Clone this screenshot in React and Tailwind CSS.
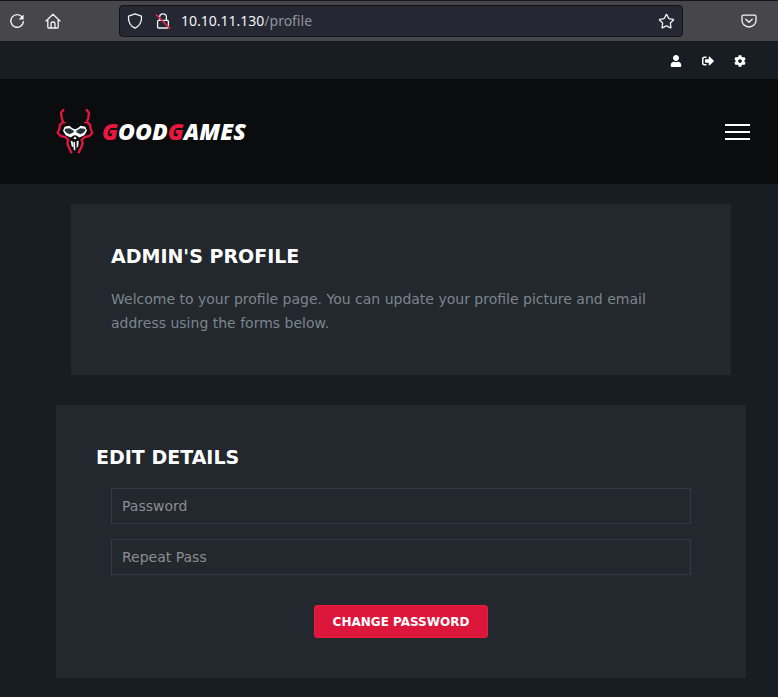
import React from 'react';
import { Star } from 'lucide-react';
import { FaCog, FaSignOutAlt, FaUser } from 'react-icons/fa';

const HomeIcon = () => (
  <svg viewBox="0 0 16 16" className="h-4 w-4" fill="none" stroke="currentColor" strokeWidth="1.3" strokeLinejoin="round" strokeLinecap="round">
    <path d="M1 8 8 1.2 15 8M2.8 6.8v7.4c0 .4.3.8.8.8h8.8c.5 0 .8-.4.8-.8V6.8" />
    <path d="M6 15v-4.2c0-1 .8-1.8 2-1.8s2 .8 2 1.8V15" />
  </svg>
);

const ReloadIcon = () => (
  <svg viewBox="0 0 16 16" className="h-4 w-4" fill="none" stroke="currentColor" strokeWidth="1.4" strokeLinecap="round">
    <path d="M13.2 4.2A6.3 6.3 0 1 0 14.4 8.6" />
    <path d="M14.6 1.4v5H9.6z" fill="currentColor" stroke="none" />
  </svg>
);

const ShieldIcon = () => (
  <svg viewBox="0 0 16 16" className="h-4 w-4" fill="none" stroke="currentColor" strokeWidth="1.3" strokeLinejoin="round">
    <path d="M8 .8 14.4 3.2c.6 5.6-1.4 9.6-6.4 12C3 12.8 1 8.8 1.6 3.2z" />
  </svg>
);

const InsecureIcon = () => (
  <svg viewBox="0 0 16 16" className="h-4 w-4" fill="none" stroke="currentColor" strokeWidth="1.3">
    <rect x="2.6" y="7.4" width="10.8" height="7.6" rx="1" />
    <path d="M4.6 7.4V4.3a3.4 3.4 0 0 1 6.8 0v3.1" />
    <path d="M1 1.5 15 15.5" stroke="#e22850" strokeWidth="1.7" />
  </svg>
);

const PocketIcon = () => (
  <svg viewBox="0 0 16 16" className="h-4 w-4" fill="none" stroke="currentColor" strokeWidth="1.3" strokeLinecap="round" strokeLinejoin="round">
    <path d="M2.2 2.2h11.6c.7 0 1.2.5 1.2 1.2v4A7 6.6 0 0 1 1 7.4v-4c0-.7.5-1.2 1.2-1.2z" />
    <path d="M4.8 6.2 8 9.2l3.2-3" />
  </svg>
);

const SkullLogo = () => (
  <svg viewBox="16 24 114 140" className="h-[47px] w-[38px]" aria-hidden="true">
    <g fill="none" stroke="#e3173e" strokeWidth="7" strokeLinejoin="round">
      <path d="M40 27l-9 11 2 14 4 14-9 8-2 12-5 12 8 9 15 4 9 8-3 11 5 13 8 16" />
      <path d="M106 27l9 11-2 14-4 14 9 8 2 12 5 12-8 9-15 4-9 8 3 11-5 13-8 16" />
      <path d="M36 68l10-1M110 68l-10-1" strokeWidth="4" />
    </g>
    <path fill="#fff" d="M42 80l14-3 9 7 8 3 8-3 9-7 14 3 5 12-8 13-15 7-9-6-4-1-4 1-9 6-15-7-8-13z" />
    <path fill="#26323a" d="M43 86l14-2 12 8v4l-12 6-10-4-5-7zM103 86l-14-2-12 8v4l12 6 10-4 5-7z" />
    <path fill="#fff" d="M73 109l5 6-5 2-5-2zM60 122l6 1 2 18-5-3zM68 126l5-1 1 27-5-4zM78 123l6-1-1 15-5 8z" />
  </svg>
);

const BrowserBar = () => (
  <div className="flex h-[42px] items-center border-y border-[#14171f] bg-[#46464b] pl-[9px] pr-[21px] text-gray-100">
    <div className="flex w-[110px] shrink-0 items-center gap-5">
      <button aria-label="Reload"><ReloadIcon /></button>
      <button aria-label="Home"><HomeIcon /></button>
    </div>
    <div className="flex h-8 flex-1 items-center gap-2.5 rounded border border-[#11131c] bg-[#252733] px-[7px]">
      <div className="flex gap-3">
        <ShieldIcon />
        <InsecureIcon />
      </div>
      <div className="flex-1 font-['Noto_Sans',sans-serif] text-sm">
        10.10.11.130<span className="text-[#93949b]">/profile</span>
      </div>
      <button aria-label="Bookmark"><Star className="h-[17px] w-[17px]" strokeWidth={1.8} /></button>
    </div>
    <button aria-label="Save to Pocket" className="ml-[58px]"><PocketIcon /></button>
  </div>
);

const Header = () => (
  <header className="text-white">
    <div className="flex h-[37px] items-center justify-end gap-5 pr-8">
      <a href="#profile" aria-label="Profile"><FaUser className="h-3 w-3" /></a>
      <a href="#logout" aria-label="Log out"><FaSignOutAlt className="h-3 w-3" /></a>
      <a href="#settings" aria-label="Settings"><FaCog className="h-3 w-3" /></a>
    </div>
    <nav className="flex h-[105px] items-center justify-between bg-[#0a0c0d] pl-14 pr-7">
      <a href="#home" className="flex items-center gap-2">
        <SkullLogo />
        <span className="font-['Open_Sans',sans-serif] text-[23px] font-extrabold italic">
          <span className="text-[#e8173f]">G</span>OOD<span className="text-[#e8173f]">G</span>AMES
        </span>
      </a>
      <button aria-label="Menu" className="flex w-[25px] flex-col gap-[5px]">
        <span className="h-0.5 w-full bg-white" />
        <span className="h-0.5 w-full bg-white" />
        <span className="h-0.5 w-full bg-white" />
      </button>
    </nav>
  </header>
);

const Field = ({ id, label }) => (
  <input
    id={id}
    type="password"
    aria-label={label}
    placeholder={label}
    className="block h-9 w-full border border-[#2f3e46] bg-transparent px-2.5 text-sm text-white outline-none placeholder:text-[#8b8f93]"
  />
);

const App = () => {
  return (
    <div className="min-h-screen bg-[#181d23] font-['DejaVu_Sans',sans-serif]">
      <BrowserBar />
      <Header />
      <main className="pb-5 pl-14 pr-8 pt-5">
        {/* Profile intro */}
        <section className="mx-[15px] bg-[#23272e] p-10">
          <h1 className="text-[19px] leading-6 font-bold text-white">ADMIN'S PROFILE</h1>
          <p className="mt-[19px] text-sm leading-6 text-[#7c868c]">
            Welcome to your profile page. You can update your profile picture and email address using the forms below.
          </p>
        </section>

        {/* Password form */}
        <section className="mt-[30px] bg-[#23272e] p-10">
          <h2 className="text-[19px] leading-6 font-bold text-white">EDIT DETAILS</h2>
          <form className="mx-[15px] mt-[19px] flex flex-col gap-[15px]">
            <Field id="password" label="Password" />
            <Field id="repeat" label="Repeat Pass" />
            <button
              type="button"
              className="mt-[15px] h-[33px] self-center rounded-[3px] border border-[#ee1a42] bg-[#dd163b] px-[18px] text-xs font-bold text-white"
            >
              CHANGE PASSWORD
            </button>
          </form>
        </section>
      </main>
    </div>
  );
};

export default App;
